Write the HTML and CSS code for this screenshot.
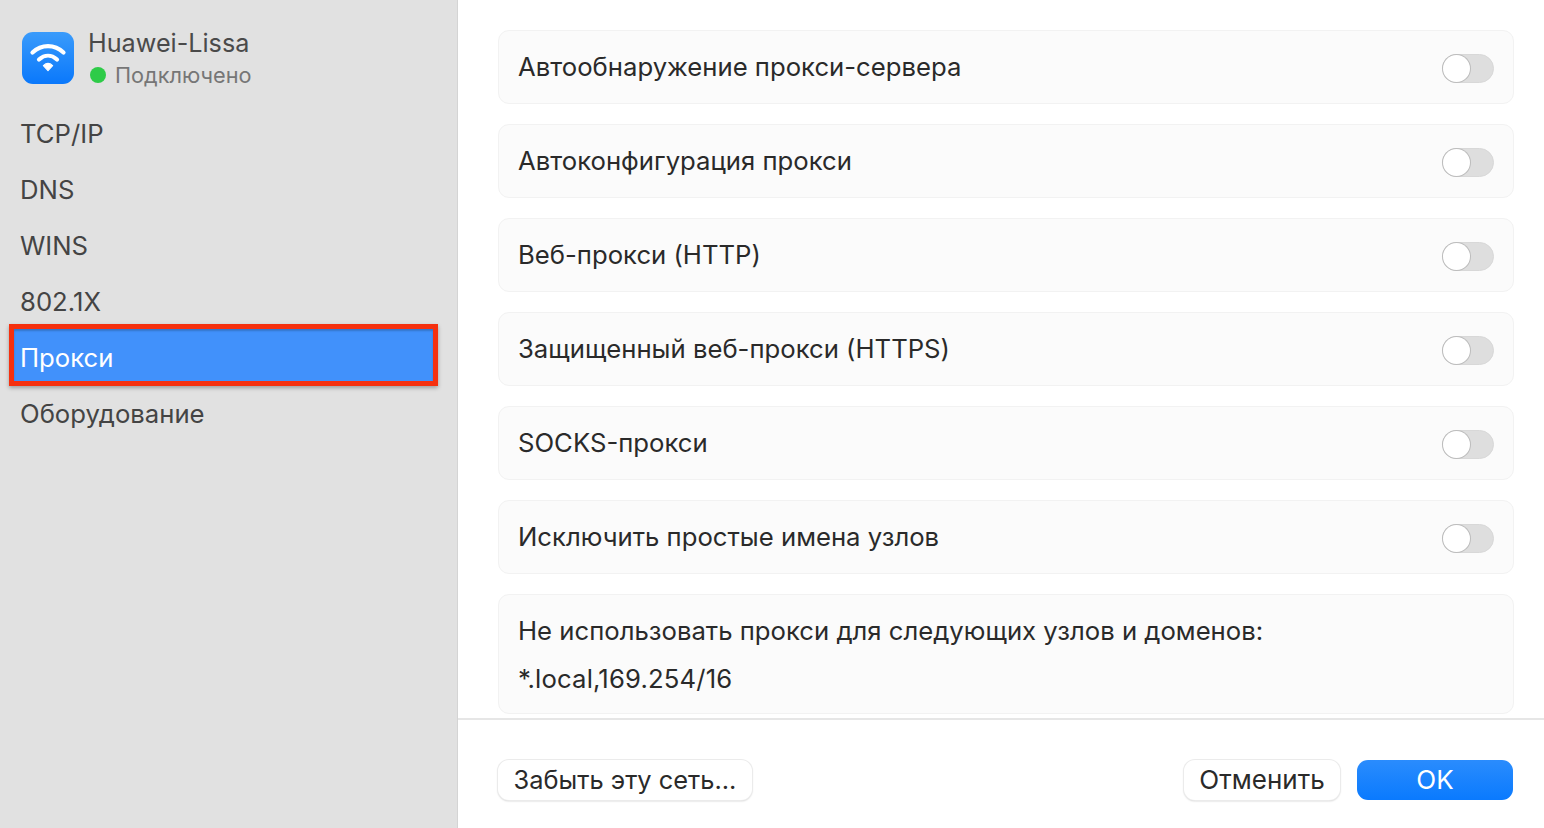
FILE: index.html
```html
<!DOCTYPE html>
<html lang="ru">
<head>
<meta charset="utf-8">
<title>Прокси</title>
<link rel="stylesheet" href="styles.css">
</head>
<body>
<div class="window">
  <aside class="sidebar">
    <div class="network">
      <svg class="wifi-icon" viewBox="0 0 52 52" width="52" height="52" aria-hidden="true">
        <defs><linearGradient id="wifiBg" x1="0" y1="0" x2="0" y2="1"><stop offset="0" stop-color="#3a9bfb"/><stop offset="1" stop-color="#0a78fb"/></linearGradient></defs>
        <rect width="52" height="52" rx="11" fill="url(#wifiBg)"/>
        <path d="M10.5 20.5C19.5 12 32.5 12 41.5 20.5" fill="none" stroke="#fff" stroke-width="4.2" stroke-linecap="round"/>
        <path d="M17 27.5C22.5 22.5 29.5 22.5 35 27.5" fill="none" stroke="#fff" stroke-width="4.2" stroke-linecap="round"/>
        <path d="M21.4 33.6C24.2 31 27.8 31 30.6 33.6L26 38.6Z" fill="#fff" stroke="#fff" stroke-width="1.2" stroke-linejoin="round"/>
      </svg>
      <div class="network-text">
        <div class="network-name">Huawei-Lissa</div>
        <div class="network-status"><span class="dot"></span>Подключено</div>
      </div>
    </div>
    <nav class="nav">
      <div class="nav-item">TCP/IP</div>
      <div class="nav-item">DNS</div>
      <div class="nav-item">WINS</div>
      <div class="nav-item">802.1X</div>
      <div class="nav-item selected">Прокси</div>
      <div class="nav-item">Оборудование</div>
    </nav>
  </aside>
  <main class="main">
    <div class="content">
      <div class="row"><span>Автообнаружение прокси-сервера</span><span class="toggle"></span></div>
      <div class="row"><span>Автоконфигурация прокси</span><span class="toggle"></span></div>
      <div class="row"><span>Веб-прокси (HTTP)</span><span class="toggle"></span></div>
      <div class="row"><span>Защищенный веб-прокси (HTTPS)</span><span class="toggle"></span></div>
      <div class="row"><span>SOCKS-прокси</span><span class="toggle"></span></div>
      <div class="row"><span>Исключить простые имена узлов</span><span class="toggle"></span></div>
      <div class="row block">
        <div>Не использовать прокси для следующих узлов и доменов:</div>
        <div class="exceptions">*.local,169.254/16</div>
      </div>
    </div>
    <footer class="footer">
      <button class="btn forget">Забыть эту сеть...</button>
      <div class="actions">
        <button class="btn cancel">Отменить</button>
        <button class="btn ok">OK</button>
      </div>
    </footer>
  </main>
</div>
</body>
</html>
```

FILE: styles.css
```css
* { box-sizing: border-box; }
html, body { margin: 0; height: 100%; overflow: hidden; }
body { font-family: Inter, "Liberation Sans", sans-serif; background: #fff; color: #2a2a2a; }
.window { display: flex; width: 1544px; height: 828px; }

.sidebar { width: 458px; flex: none; background: #e1e1e1; border-right: 1px solid #d4d4d4; padding: 22px 19px 0 9px; }
.network { display: flex; align-items: center; height: 72px; padding-left: 13px; gap: 14px; }
.wifi-icon { flex: none; }
.network-text { display: flex; flex-direction: column; gap: 3px; margin-top: 1px; }
.network-name { font-size: 25.2px; line-height: 30px; color: #4a4a4a; }
.network-status { display: flex; align-items: center; font-size: 21.7px; line-height: 28px; color: #767676; }
.dot { width: 16px; height: 16px; border-radius: 50%; background: #2ecb48; margin: 0 9px 0 2px; }

.nav { display: flex; flex-direction: column; margin-top: 11px; }
.nav-item { height: 56px; display: flex; align-items: center; padding-left: 11px; font-size: 25.7px; color: #444; }
.nav-item.selected { height: 62px; margin: -5px 0 -1px; padding: 4px 0 0 6px; color: #fff; background: #4191fb; border: 5px solid #f5300f; box-shadow: 0 2px 4px rgba(0,0,0,.3), inset 0 2px 2px rgba(0,0,0,.2); }

.main { flex: 1; display: flex; flex-direction: column; min-width: 0; }
.content { flex: none; height: 720px; padding: 30px 30px 0 40px; display: flex; flex-direction: column; gap: 20px; border-bottom: 2px solid #e6e6e6; overflow: hidden; }
.row { flex: none; height: 74px; display: flex; align-items: center; justify-content: space-between; padding: 0 19px 2px 19px; background: #fbfbfb; border: 1px solid #f2f2f2; border-radius: 11px; font-size: 25.7px; color: #2a2a2a; }
.row.block { height: 120px; display: block; padding-top: 12px; }
.row.block > div { height: 48px; line-height: 48px; }
.row.block > .exceptions { letter-spacing: .15px; }
.toggle { position: relative; width: 52px; height: 29px; margin-top: 4px; border-radius: 15px; background: #dedede; border: 1px solid #d8d8d8; flex: none; }
.toggle::after { content: ""; position: absolute; left: 0; top: 0; width: 27px; height: 27px; border-radius: 50%; background: #fff; box-shadow: 0 0 0 1px #bdbdbd; }

.footer { flex: 1; display: flex; align-items: center; justify-content: space-between; padding: 12px 31px 0 40px; }
.actions { display: flex; gap: 17px; }
.btn { height: 40px; border: none; border-radius: 11px; font-family: inherit; font-size: 26px; background: #fff; color: #2a2a2a; padding: 0 0 2px; box-shadow: 0 0 0 1px #ebebeb, 0 1px 2px rgba(0,0,0,.25); }
.forget { width: 254px; font-size: 25.4px; }
.cancel { width: 156px; }
.ok { width: 156px; color: #fff; background: linear-gradient(#2a8cfd, #0a7afe); box-shadow: none; }
```
